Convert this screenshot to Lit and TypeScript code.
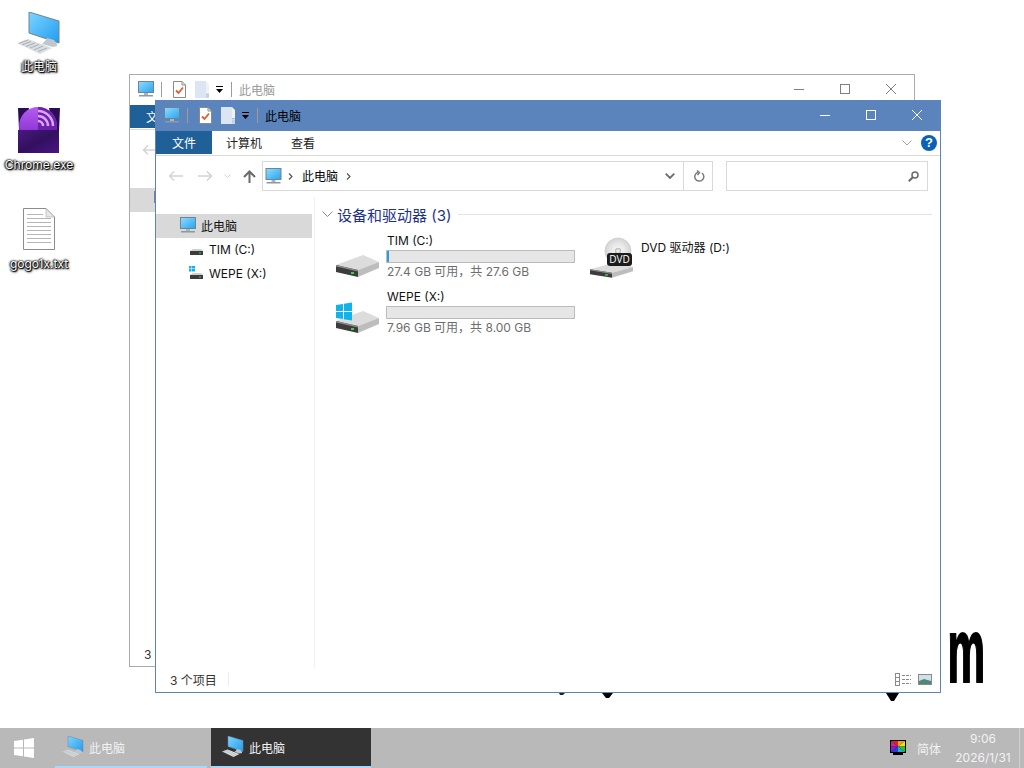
import { LitElement, html, css, svg } from "lit";
import { customElement, property } from "lit/decorators.js";

const FONT = css`Inter, "Noto Sans CJK SC", sans-serif`;

const monitor = (w = 16, h = 16) => html`<svg width=${w} height=${h} viewBox="0 0 16 16" class="ico">
  <defs><linearGradient id="scr" x1="0" y1="0" x2="1" y2="1"><stop offset="0" stop-color="#8fdcff"/><stop offset="1" stop-color="#28a4f0"/></linearGradient></defs>
  <rect x="0.5" y="0.5" width="15" height="11" fill="url(#scr)" stroke="#6f8494"/>
  <rect x="6" y="12" width="4" height="2" fill="#a9b4bc"/>
  <rect x="1" y="14" width="14" height="1.5" fill="#8a9aa6"/>
</svg>`;

const checkDoc = () => html`<svg width="15" height="17" viewBox="0 0 15 17" class="ico">
  <path d="M1.5.5H10L13.5 4V16.5H1.5Z" fill="#fff" stroke="#8a8a8a"/>
  <path d="M10 .5V4H13.5" fill="none" stroke="#8a8a8a"/>
  <path d="M4 9.5L6.5 12L11 6.5" fill="none" stroke="#e8582a" stroke-width="1.8"/>
</svg>`;

const blankDoc = () => html`<svg width="14" height="17" viewBox="0 0 14 17" class="ico">
  <path d="M0 0H11V12H14V17H0Z" fill="#dce5f2"/>
  <path d="M11 0L14 3V11.5H11Z" fill="#eef2f8"/>
  <path d="M11 12.5H14V16.5H11Z" fill="#c5d2e4"/>
</svg>`;

const dropArrow = () => html`<svg width="10" height="8" viewBox="0 0 10 8" class="ico">
  <rect x="2" y="0" width="7" height="1" fill="#000"/><path d="M2 3H9L5.5 7Z" fill="#000"/>
</svg>`;

const driveBody = svg`
  <path d="M0 10L27 0L43 7L22 15Z" fill="#dcdcdc"/>
  <path d="M22 15L43 7V13L22 22Z" fill="#bdbdbd"/>
  <path d="M0 10L22 15V22L0 17Z" fill="#3c3c3c"/>
  <path d="M0 10L22 15V16.5L0 11.5Z" fill="#8c8c8c"/>
  <rect x="15" y="17" width="3" height="2" fill="#36d04a"/>`;

const drive = (win = false) => html`<svg width="44" height="42" viewBox="0 0 44 42" class="ico">
  <g transform="translate(0 19)">${driveBody}</g>
  ${win ? svg`<g fill="#10b3ea" transform="translate(0 11)">
    <path d="M0 2L7 1V8H0Z"/><path d="M8 .8L16 -.5V8H8Z"/><path d="M0 9H7V16L0 15Z"/><path d="M8 9H16V17.5L8 16.2Z"/></g>` : ""}
</svg>`;

const dvd = () => html`<div class="dvd">
  <svg width="44" height="44" viewBox="0 0 44 44" class="ico">
    <defs><radialGradient id="disc"><stop offset="0" stop-color="#fff"/><stop offset=".22" stop-color="#bcbcbc"/><stop offset=".28" stop-color="#f2f2f2"/><stop offset="1" stop-color="#d4d4d4"/></radialGradient></defs>
    <g transform="translate(1 26) scale(1 .72)">${driveBody}</g>
    <circle cx="29" cy="15" r="13" fill="url(#disc)" stroke="#c4c4c4" stroke-width=".6"/>
  </svg>
  <span class="dvd-label">DVD</span>
</div>`;

const smallDrive = (win = false) => html`<svg width="15" height="15" viewBox="0 0 15 15" class="ico">
  ${win ? svg`<g fill="#10b3ea"><rect x="0" y="0" width="2.5" height="2.5"/><rect x="3" y="0" width="3" height="2.5"/><rect x="0" y="3" width="2.5" height="2.5"/><rect x="3" y="3" width="3" height="2.5"/></g>` : ""}
  <path d="M1 9L4 7H12L14 9Z" fill="#cfcfcf"/>
  <rect x="1" y="9" width="13" height="4" fill="#3c3c3c"/>
  <rect x="10" y="10.5" width="2" height="1" fill="#36d04a"/>
</svg>`;

const pcLarge = (w: number, h: number) => html`<svg width=${w} height=${h} viewBox="0 0 44 44" class="ico">
  <defs><linearGradient id="pcs" x1="0" y1="0" x2="1" y2="1"><stop offset="0" stop-color="#7fd4ff"/><stop offset="1" stop-color="#1f9df0"/></linearGradient></defs>
  <path d="M12 0L42 9V31L12 21Z" fill="url(#pcs)" stroke="#6f8494" stroke-width="1"/>
  <path d="M30 26L37 28L40 32V34L36 35L25 32L28 29Z" fill="#bfc7cc"/>
  <path d="M0 31L11 27L35 36L23 42Z" fill="#d9dee2"/>
  <path d="M2 31.5L11 28M5 33L14 29.5M9 34.5L18 31M13 36L22 32.5M17 38L26 34M21 39.5L30 36" stroke="#9aa3a9" stroke-width=".8"/>
</svg>`;

@customElement("explorer-window")
class ExplorerWindow extends LitElement {
  @property({ type: Boolean, reflect: true }) active = false;

  static styles = css`
    :host { display: flex; flex-direction: column; box-sizing: border-box; width: 786px; height: 593px;
      border: 1px solid #ababab; background: #fff; font: 12px ${FONT}; color: #000; }
    :host([active]) { border-color: #5b84bc; }
    .ico { display: block; flex: none; }
    .title { box-sizing: border-box; height: 30px; margin: 0 -1px 0 -1px; padding: 0 0 2px 9px; display: flex; align-items: center; background: transparent; color: #9a9a9a; flex: none; }
    :host([active]) .title { background: #5b84bc; color: #000; }
    .qsep { width: 1px; height: 15px; background: #9c9c9c; margin: 0 10px 0 7px; }
    .qsep.b { margin: 0 7px 0 7px; }
    .q2 { margin-left: 8px; }
    .q3 { margin-left: 5px; margin-top: 2px; }
    .winbtns { margin-left: auto; display: flex; padding-right: 19px; gap: 36px; align-items: center; }
    .winbtns svg { stroke: #7f7f7f; fill: none; }
    :host([active]) .winbtns svg { stroke: #fff; }
    .tabs { height: 24px; flex: none; display: flex; align-items: stretch; border-bottom: 1px solid #dadada; }
    .tab { width: 56px; height: 23px; background: #1f6099; color: #fff; display: flex; align-items: center; justify-content: center; }
    .tabname { display: flex; align-items: center; height: 23px; color: #222; }
    .tabname.a { margin-left: 14px; }
    .tabname.b { margin-left: 29px; }
    .tabend { margin-left: auto; display: flex; align-items: center; gap: 9px; padding-right: 3px; }
    .help { width: 16px; height: 16px; border-radius: 50%; background: #0a62b8; color: #fff; font: bold 13px/16px "Liberation Sans", sans-serif; text-align: center; }
    .nav { height: 41px; flex: none; box-sizing: border-box; padding-top: 5px; display: flex; align-items: flex-start; }
    .navbtns { width: 106px; height: 30px; flex: none; display: flex; align-items: center; padding-left: 12px; box-sizing: border-box; }
    .m13 { margin-left: 13px; } .m11 { margin-left: 11px; } .m12 { margin-left: 12px; } .m6 { margin-left: 6px; }
    .addr { width: 451px; height: 30px; box-sizing: border-box; border: 1px solid #d9d9d9; flex: none; display: flex; align-items: center; padding-left: 2px; color: #000; }
    .crumb { margin: 0 8px 0 9px; padding-bottom: 2px; }
    .addr .right { margin-left: auto; display: flex; height: 100%; align-items: center; }
    .addr .r { width: 29px; box-sizing: border-box; padding-left: 3px; height: 100%; border-left: 1px solid #d9d9d9; display: flex; align-items: center; justify-content: center; margin-left: 8px; }
    .search { width: 202px; height: 30px; box-sizing: border-box; border: 1px solid #d9d9d9; margin-left: 13px; display: flex; align-items: center; justify-content: flex-end; padding-right: 8px; }
    .body { flex: 1; display: flex; min-height: 0; }
    .side { width: 159px; flex: none; box-sizing: border-box; border-right: 1px solid #f0f0f0; padding-top: 17px; }
    .sitem { height: 24px; width: 156px; display: flex; align-items: center; color: #111; box-sizing: border-box; padding-bottom: 2px; }
    .sitem.sel { background: #d9d9d9; padding-left: 24px; gap: 5px; }
    .sitem.sub { padding-left: 33px; gap: 5px; }
    .main { flex: 1; padding: 7px 8px 0 7px; min-width: 0; }
    .ghead { display: flex; align-items: center; height: 20px; color: #1e3287; font-size: 15px; }
    .ghead .cv { margin-right: 4px; }
    .ghead .line { flex: 1; height: 1px; background: #e2e2e2; margin-left: 7px; }
    .grid { display: grid; grid-template-columns: 253px 253px; grid-auto-rows: 56px; margin: 9px 0 0 14px; }
    .tile { display: flex; gap: 7px; align-items: flex-start; }
    .tile > .ico, .tile > .dvd { margin-top: 3px; }
    .tinfo { width: 189px; }
    .tname { height: 16px; line-height: 16px; color: #111; }
    .tname.solo { margin: 7px 0 0 1px; }
    .bar { height: 13px; box-sizing: border-box; border: 1px solid #bcbcbc; background: #e6e6e6; margin: 1px 1px 0 -1px; }
    .bar i { display: block; height: 100%; background: #26a0da; width: 2px; }
    .tsize { color: #6d6d6d; height: 16px; line-height: 16px; margin-top: 1px; white-space: nowrap; }
    .dvd { position: relative; width: 44px; height: 44px; flex: none; }
    .dvd-label { position: absolute; left: 18px; top: 17px; width: 25px; height: 13px; border-radius: 3px; background: #1c1c1c; color: #fff; font: 10px/13px "Open Sans", sans-serif; text-align: center; }
    .status { height: 24px; flex: none; box-sizing: border-box; padding: 0 0 2px 14px; display: flex; align-items: center; color: #333; }
    .status .sp { width: 1px; height: 14px; background: #ececec; margin-left: 11px; }
    .status .views { margin-left: auto; display: flex; gap: 7px; padding-right: 8px; align-items: center; }
  `;

  render() {
    return html`
      <div class="title">
        ${monitor(16, 16)}
        <div class="qsep"></div>
        ${checkDoc()}
        <div class="q2">${blankDoc()}</div>
        <div class="q3">${dropArrow()}</div>
        <div class="qsep b"></div>
        <span>此电脑</span>
        <div class="winbtns">
          <svg width="10" height="10" viewBox="0 0 10 10"><path d="M0 5.5H10"/></svg>
          <svg width="10" height="10" viewBox="0 0 10 10"><rect x=".5" y=".5" width="9" height="9"/></svg>
          <svg width="10" height="10" viewBox="0 0 10 10"><path d="M0 0L10 10M10 0L0 10"/></svg>
        </div>
      </div>
      <div class="tabs">
        <div class="tab">文件</div>
        <div class="tabname a">计算机</div>
        <div class="tabname b">查看</div>
        <div class="tabend">
          <svg width="10" height="6" viewBox="0 0 10 6" fill="none" stroke="#a0a0a0"><path d="M.5.5L5 5L9.5.5"/></svg>
          <div class="help">?</div>
        </div>
      </div>
      <div class="nav">
        <div class="navbtns">
          <svg width="16" height="12" viewBox="0 0 16 12" class="ico" fill="none" stroke="#d4d4d4" stroke-width="1.5"><path d="M15 6H1.5M6 1.5L1.5 6L6 10.5"/></svg>
          <svg width="16" height="12" viewBox="0 0 16 12" class="ico m13" fill="none" stroke="#d4d4d4" stroke-width="1.5"><path d="M1 6H14.5M10 1.5L14.5 6L10 10.5"/></svg>
          <svg width="7" height="5" viewBox="0 0 7 5" class="ico m11" fill="none" stroke="#d4d4d4"><path d="M.5.5L3.5 3.5L6.5.5"/></svg>
          <svg width="13" height="13" viewBox="0 0 13 13" class="ico m12" fill="none" stroke="#6a6a6a" stroke-width="2"><path d="M6.5 13V2M1 7L6.5 1.5L12 7"/></svg>
        </div>
        <div class="addr">
          ${monitor(17, 16)}
          <svg width="5" height="7" viewBox="0 0 5 7" class="ico m6" fill="none" stroke="#555" stroke-width="1.2"><path d="M1 .5L4 3.5L1 6.5"/></svg>
          <span class="crumb">此电脑</span>
          <svg width="5" height="7" viewBox="0 0 5 7" class="ico" fill="none" stroke="#555" stroke-width="1.2"><path d="M1 .5L4 3.5L1 6.5"/></svg>
          <div class="right">
            <svg width="10" height="6" viewBox="0 0 10 6" class="ico" fill="none" stroke="#6a6a6a" stroke-width="1.8"><path d="M.7.7L5 5L9.3.7"/></svg>
            <div class="r"><svg width="11" height="13" viewBox="0 0 11 13" class="ico" fill="none" stroke="#7a7a7a" stroke-width="1.5"><path d="M4 2.3A4.5 4.5 0 1 0 8 3"/><path d="M3 .5L5.5 2.5L3.5 5"/></svg></div>
          </div>
        </div>
        <div class="search">
          <svg width="11" height="11" viewBox="0 0 11 11" class="ico" fill="none" stroke="#6a6a6a"><circle cx="7" cy="4" r="3" stroke-width="1.5"/><path d="M5 6L.8 10.2" stroke-width="2"/></svg>
        </div>
      </div>
      <div class="body">
        <div class="side">
          <div class="sitem sel">${monitor(16, 16)}<span>此电脑</span></div>
          <div class="sitem sub">${smallDrive()}<span>TIM (C:)</span></div>
          <div class="sitem sub">${smallDrive(true)}<span>WEPE (X:)</span></div>
        </div>
        <div class="main">
          <div class="ghead">
            <svg class="cv" width="11" height="6" viewBox="0 0 11 6" fill="none" stroke="#8a8a8a"><path d="M.5.5L5.5 5.5L10.5.5"/></svg>
            <span>设备和驱动器 (3)</span><div class="line"></div>
          </div>
          <div class="grid">
            <div class="tile">${drive()}<div class="tinfo"><div class="tname">TIM (C:)</div><div class="bar"><i></i></div><div class="tsize">27.4 GB 可用，共 27.6 GB</div></div></div>
            <div class="tile">${dvd()}<div class="tinfo"><div class="tname solo">DVD 驱动器 (D:)</div></div></div>
            <div class="tile">${drive(true)}<div class="tinfo"><div class="tname">WEPE (X:)</div><div class="bar"></div><div class="tsize">7.96 GB 可用，共 8.00 GB</div></div></div>
          </div>
        </div>
      </div>
      <div class="status">
        <span>3 个项目</span><div class="sp"></div>
        <div class="views">
          <svg width="16" height="13" viewBox="0 0 16 13" class="ico"><g fill="none" stroke="#8a8a8a"><rect x=".5" y=".5" width="4" height="4"/><rect x=".5" y="4.5" width="4" height="4"/><rect x=".5" y="8.5" width="4" height="4"/><path d="M7 2.5H16M7 6.5H16M7 10.5H16" stroke-dasharray="3 1"/></g></svg>
          <svg width="14" height="11" viewBox="0 0 14 11" class="ico"><rect x=".5" y=".5" width="13" height="10" fill="#cfe0ea" stroke="#8a8a8a"/><path d="M1 7L6 5L13 7V10H1Z" fill="#4f8a78"/></svg>
        </div>
      </div>
    `;
  }
}

@customElement("app-root")
class AppRoot extends LitElement {
  static styles = css`
    :host { display: block; position: relative; width: 1024px; height: 768px; overflow: hidden; background: #fff; font: 12px ${FONT}; }
    .desk { position: absolute; display: flex; flex-direction: column; align-items: center; width: 78px; left: 0; }
    .d1 { top: 12px; } .d2 { top: 106px; } .d3 { top: 208px; }
    .desk .ico { display: block; }
    .lbl { color: #fff; white-space: nowrap; line-height: 16px; text-shadow: 0 0 1px #000, 1px 1px 1px #000, 0 0 2px #000, 1px 1px 3px #000, -1px 0 2px #333; }
    .mt3 { margin-top: 3px; } .mt6 { margin-top: 6px; }
    .w1 { position: absolute; left: 129px; top: 74px; }
    .w2 { position: absolute; left: 155px; top: 100px; }
    .wall { position: absolute; left: 938px; top: 601px; font: bold 90px/100px "Liberation Sans", sans-serif; color: #000; -webkit-text-stroke: 2px #000; transform: scaleX(.47); transform-origin: 18px 0; }
    .tri { position: absolute; }
    .tr1 { left: 886px; top: 693px; } .tr2 { left: 602px; top: 693px; } .tr3 { left: 559px; top: 693px; }
    .taskbar { position: absolute; left: 0; right: 0; bottom: 0; height: 40px; background: #b9b9b9; display: flex; color: #f2f2f2; }
    .start { width: 55px; display: flex; align-items: center; padding-left: 14px; box-sizing: border-box; flex: none; }
    .task { height: 40px; box-sizing: border-box; display: flex; align-items: center; border-bottom: 2px solid #a6d8ff; gap: 5px; flex: none; }
    .task .ico { display: block; }
    .t1 { width: 152px; padding-left: 7px; margin-right: 4px; }
    .t2 { width: 160px; padding-left: 11px; background: #333; }
    .tray { margin-left: auto; display: flex; align-items: center; }
    .tray .ime { margin-left: 11px; }
    .clock { width: 72px; margin-left: 6px; text-align: center; line-height: 19px; }
    .edge { width: 5px; height: 40px; border-left: 1px solid #d0d0d0; box-sizing: border-box; margin-left: 0; }
  `;

  render() {
    return html`
      <div class="wall">m</div>
      <svg class="tri tr1" width="13" height="9" viewBox="0 0 13 9"><path d="M0 0H13L8 8H5Z" fill="#000"/></svg>
      <svg class="tri tr2" width="11" height="5" viewBox="0 0 11 5"><path d="M0 0H11L7 5H4Z" fill="#000"/></svg>
      <svg class="tri tr3" width="6" height="2" viewBox="0 0 6 2"><path d="M0 0H6L4 2H1Z" fill="#222"/></svg>

      <div class="desk d1">${pcLarge(44, 44)}<div class="lbl mt3">此电脑</div></div>
      <div class="desk d2">
        <svg class="ico" width="44" height="48" viewBox="0 0 44 48">
          <defs><linearGradient id="tb" x1="0" y1="0" x2="1" y2="1"><stop offset="0" stop-color="#4a1a80"/><stop offset=".5" stop-color="#32105f"/><stop offset="1" stop-color="#4a1585"/></linearGradient>
          <linearGradient id="tl" x1="0" y1="0" x2="0" y2="1"><stop offset="0" stop-color="#b55bef"/><stop offset="1" stop-color="#7a24c8"/></linearGradient></defs>
          <path d="M1 2H12L8 24H2Z" fill="#2b0d55"/><path d="M43 2H32L36 24H42Z" fill="#2b0d55"/>
          <circle cx="21" cy="20" r="19" fill="url(#tl)"/>
          <path d="M21 1A19 19 0 0 1 21 39Z" fill="#6d1fb0"/>
          <path d="M21 5A15 15 0 0 1 36 20" fill="none" stroke="#d9a6f5" stroke-width="2.5"/>
          <path d="M21 10A10 10 0 0 1 31 20" fill="none" stroke="#d9a6f5" stroke-width="2.5"/>
          <path d="M21 15A5 5 0 0 1 26 20" fill="none" stroke="#d9a6f5" stroke-width="2.5"/>
          <rect x="1" y="24" width="41" height="23" fill="url(#tb)"/>
        </svg>
        <div class="lbl mt3">Chrome.exe</div>
      </div>
      <div class="desk d3">
        <svg class="ico" width="32" height="42" viewBox="0 0 32 42">
          <path d="M.5.5H23L31.5 9V41.5H.5Z" fill="#fff" stroke="#8c8c8c"/>
          <path d="M23 .5V9H31.5Z" fill="#e8e8e8" stroke="#aaa" stroke-width=".6"/>
          <path d="M4 6.5H20M4 10.5H28M4 14.5H28M4 18.5H28M4 22.5H28M4 26.5H28M4 30.5H28M4 34.5H28" stroke="#b5b5b5"/>
        </svg>
        <div class="lbl mt6">gogo1x.txt</div>
      </div>

      <explorer-window class="w1"></explorer-window>
      <explorer-window class="w2" active></explorer-window>

      <div class="taskbar">
        <div class="start">
          <svg width="20" height="20" viewBox="0 0 20 20" class="ico"><g fill="#fff"><path d="M0 3L9 1.7V9.5H0Z"/><path d="M10 1.5L20 0V9.5H10Z"/><path d="M0 10.5H9V18.3L0 17Z"/><path d="M10 10.5H20V20L10 18.5Z"/></g></svg>
        </div>
        <div class="task t1">${pcLarge(22, 22)}<span>此电脑</span></div>
        <div class="task t2">${pcLarge(22, 22)}<span>此电脑</span></div>
        <div class="tray">
          <svg width="16" height="16" viewBox="0 0 16 16" class="ico">
            <rect x="0" y="0" width="16" height="13" fill="#000"/>
            <path d="M8 6.5L1 1H8Z" fill="#e0201f"/><path d="M8 6.5V1H15Z" fill="#e8a020"/>
            <path d="M8 6.5L15 1V6.5Z" fill="#e8e020"/><path d="M8 6.5H15V12Z" fill="#30c030"/>
            <path d="M8 6.5L15 12H8Z" fill="#20b0b0"/><path d="M8 6.5V12H1Z" fill="#2040e0"/>
            <path d="M8 6.5L1 12V6.5Z" fill="#8020d0"/><path d="M8 6.5H1V1Z" fill="#d020a0"/>
            <rect x="3" y="13" width="10" height="2" fill="#000"/>
          </svg>
          <span class="ime">简体</span>
          <div class="clock">9:06<br />2026/1/31</div>
          <div class="edge"></div>
        </div>
      </div>
    `;
  }
}
